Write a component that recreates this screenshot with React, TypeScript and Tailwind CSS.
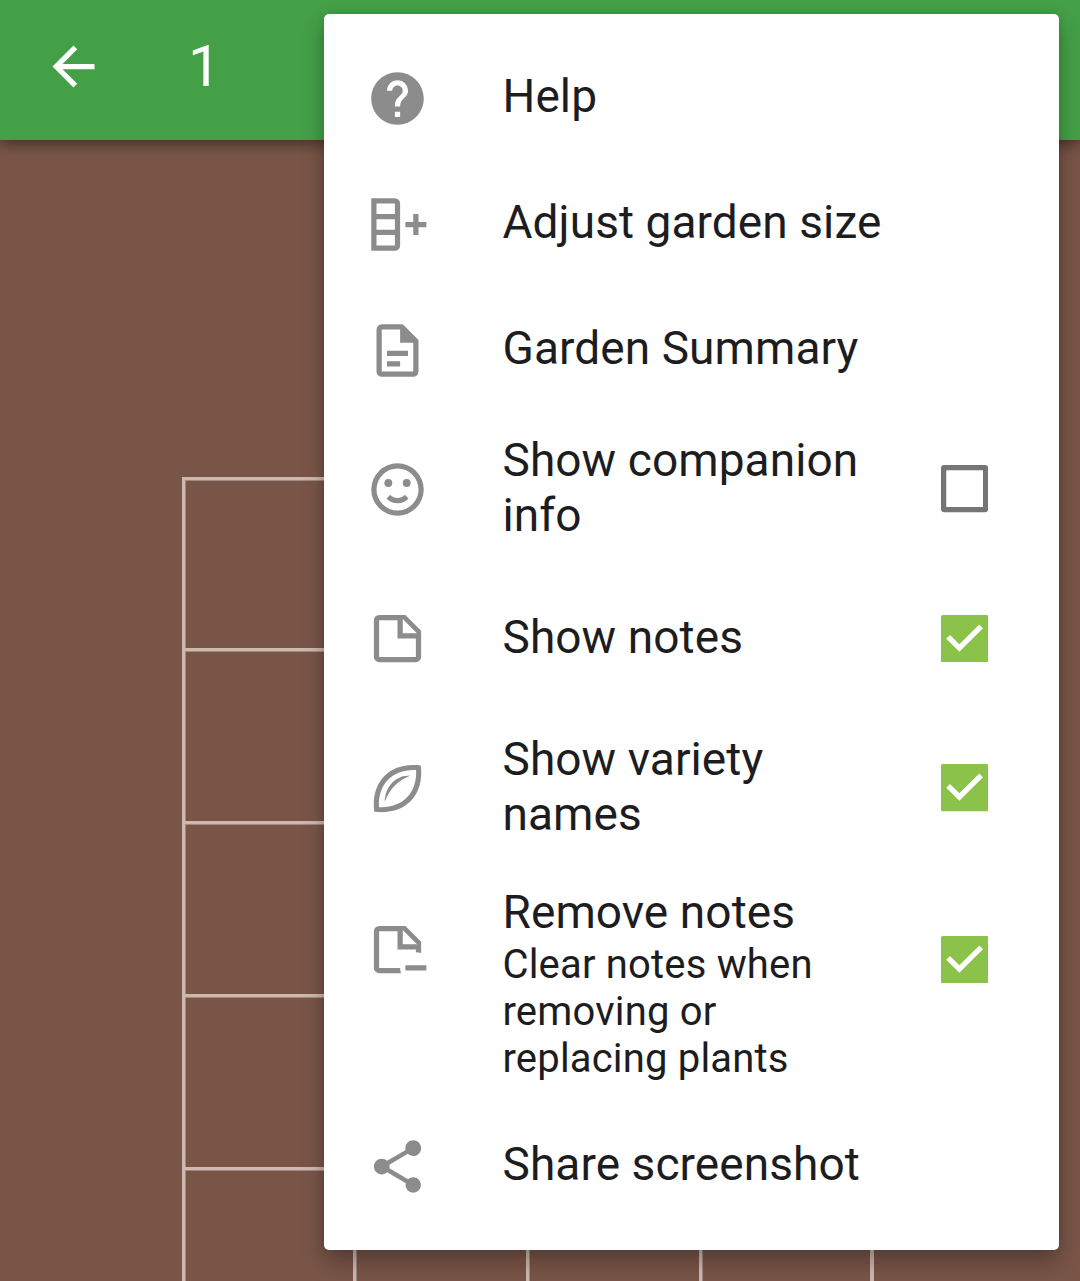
import type { ReactNode } from 'react';

const icons = {
  help: 'M12 2C6.48 2 2 6.48 2 12s4.48 10 10 10 10-4.48 10-10S17.52 2 12 2zm1 17h-2v-2h2v2zm2.07-7.75-.9.92C13.45 12.9 13 13.5 13 15h-2v-.5c0-1.1.45-2.1 1.17-2.83l1.24-1.26c.37-.36.59-.86.59-1.41 0-1.1-.9-2-2-2s-2 .9-2 2H8c0-2.21 1.79-4 4-4s4 1.79 4 4c0 .88-.36 1.68-.93 2.25z',
  size: 'M11 2a2 2 0 0 1 2 2v16a2 2 0 0 1-2 2H2V2h9M4 10v4h7v-4H4m0 6v4h7v-4H4M4 4v4h7V4H4m11 7h3V8h2v3h3v2h-3v3h-2v-3h-3v-2z',
  summary: 'M6 2h8l6 6v12a2 2 0 0 1-2 2H6a2 2 0 0 1-2-2V4a2 2 0 0 1 2-2m0 2v16h12V9h-5V4H6m2 8.1h8v2H8v-2m0 4h5v2H8v-2z',
  smile: 'M12 2a10 10 0 1 0 0 20 10 10 0 0 0 0-20m0 2a8 8 0 1 1 0 16 8 8 0 0 1 0-16M8.5 8a1.5 1.5 0 1 0 0 3 1.5 1.5 0 0 0 0-3m7 0a1.5 1.5 0 1 0 0 3 1.5 1.5 0 0 0 0-3M12 17.23c-1.75 0-3.29-.73-4.19-1.81L9.23 14c.45.72 1.52 1.23 2.77 1.23s2.32-.51 2.77-1.23l1.42 1.42c-.9 1.08-2.44 1.81-4.19 1.81z',
  note: 'M5 3h10l6 6v10a2 2 0 0 1-2 2H5a2 2 0 0 1-2-2V5a2 2 0 0 1 2-2m7 2H5v14h14v-7h-7V5m2-.4V10h5.4L14 4.6z',
  leaf: 'M3.15 20.85C1.7 9.5 9 1.7 20.85 3.2C22.3 14.5 15.2 22.3 3.15 20.85M4.95 19.1C14 19.5 19.5 13.8 19.1 4.95C10 4.5 4.5 10.4 4.95 19.1M7.1 17C7.4 11.2 11 7 16.9 7C12.3 8.8 9.3 11.7 7.1 17z',
  removeNote: 'M5 3h10l6 6v4.34c-.63-.22-1.3-.34-2-.34v-1h-7V5H5v14h8c0 .7.12 1.37.34 2H5a2 2 0 0 1-2-2V5a2 2 0 0 1 2-2m9 1.6V10h5.4L14 4.6M15 18h8v2h-8v-2z',
  share: 'M18 16.08c-.76 0-1.44.3-1.96.77L8.91 12.7c.05-.23.09-.46.09-.7s-.04-.47-.09-.7l7.05-4.11c.54.5 1.25.81 2.04.81 1.66 0 3-1.34 3-3s-1.34-3-3-3-3 1.34-3 3c0 .24.04.47.09.7L8.04 9.81C7.5 9.31 6.79 9 6 9c-1.66 0-3 1.34-3 3s1.34 3 3 3c.79 0 1.5-.31 2.04-.81l7.12 4.16c-.05.21-.08.43-.08.65 0 1.61 1.31 2.92 2.92 2.92s2.92-1.31 2.92-2.92-1.31-2.92-2.92-2.92z',
  back: 'M20 11H7.83l5.59-5.59L12 4l-8 8 8 8 1.41-1.41L7.83 13H20v-2z',
};

function Icon({ d, className }: { d: string; className: string }) {
  return (
    <svg viewBox="0 0 24 24" className={`h-[63px] w-[63px] shrink-0 ${className}`} fill="currentColor">
      <path fillRule="evenodd" d={d} />
    </svg>
  );
}

function Check({ on }: { on: boolean }) {
  return (
    <svg viewBox="0 0 18 18" className="h-[47.25px] w-[47.25px] shrink-0" role="checkbox" aria-checked={on}>
      {on ? (
        <>
          <rect width="18" height="18" rx="0.6" fill="#8bc34a" />
          <path d="M7 14 2 9l1.41-1.41L7 11.17l7.59-7.59L16 5z" fill="#fff" />
        </>
      ) : (
        <rect x="1" y="1" width="16" height="16" rx="0.2" fill="none" stroke="#757575" strokeWidth="2" strokeLinejoin="round" />
      )}
    </svg>
  );
}

function Row({ icon, height, checked, children }: { icon: string; height: string; checked?: boolean; children: ReactNode }) {
  return (
    <div className={`flex items-center pr-[71px] pl-[42px] ${height}`}>
      <Icon d={icon} className="text-[#8c8c8c]" />
      <div className={`ml-[73.5px] w-[399px] text-[46px] leading-[55px] tracking-[0.08px] text-[#1d1d1f] ${checked === undefined ? 'pb-[4px]' : 'pb-[2px]'}`}>
        {children}
      </div>
      {checked !== undefined && (
        <div className="ml-auto flex">
          <Check on={checked} />
        </div>
      )}
    </div>
  );
}

export default function App() {
  return (
    <div className="relative h-[1281px] w-[1080px] overflow-hidden bg-[#795548] font-[Roboto,sans-serif]">
      <header className="relative flex h-[140px] items-center bg-[#43a047] pl-[42px] text-white shadow-[0_5px_12px_rgba(0,0,0,0.4)]">
        <Icon d={icons.back} className="mt-[-7px]" />
        <h1 className="mt-[-8px] ml-[83px] text-[58px] leading-none">1</h1>
      </header>

      <div className="mt-[337px] ml-[182px] grid w-[692px] grid-cols-[171px_173px_173px_171px] grid-rows-[171px_173px_173px_173px_173px] border-r-[4px] border-[#cdb5ab]">
        {Array.from({ length: 20 }, (_, i) => (
          <div key={i} className="border-t-[3px] border-l-[3px] border-[#cfb9af] shadow-[inset_1px_1px_0_#a18a80]" />
        ))}
      </div>

      <div className="absolute top-[14px] left-[324px] h-[1236px] w-[735px] rounded-[5px] bg-white pt-[21px] shadow-[0_12px_22px_rgba(0,0,0,0.28),0_0_8px_rgba(0,0,0,0.1)]">
        <Row icon={icons.help} height="h-[126px]">Help</Row>
        <Row icon={icons.size} height="h-[126px]">Adjust garden size</Row>
        <Row icon={icons.summary} height="h-[126px]">Garden Summary</Row>
        <Row icon={icons.smile} height="h-[152px]" checked={false}>Show companion<br />info</Row>
        <Row icon={icons.note} height="h-[147px]" checked>Show notes</Row>
        <Row icon={icons.leaf} height="h-[152px]" checked>Show variety<br />names</Row>
        <div className="flex h-[239px] items-start pt-[21px] pr-[71px] pl-[42px]">
          <Icon d={icons.removeNote} className="mt-[33px] text-[#8c8c8c]" />
          <div className="ml-[73.5px] w-[399px] text-[#1d1d1f]">
            <div className="text-[46px] leading-[55px] tracking-[0.08px]">Remove notes</div>
            <div className="mt-px text-[40px] leading-[47px] tracking-[0.18px]">Clear notes when<br />removing or<br />replacing plants</div>
          </div>
          <div className="mt-[51px] ml-auto flex">
            <Check on />
          </div>
        </div>
        <Row icon={icons.share} height="h-[126px]">Share screenshot</Row>
      </div>
    </div>
  );
}
